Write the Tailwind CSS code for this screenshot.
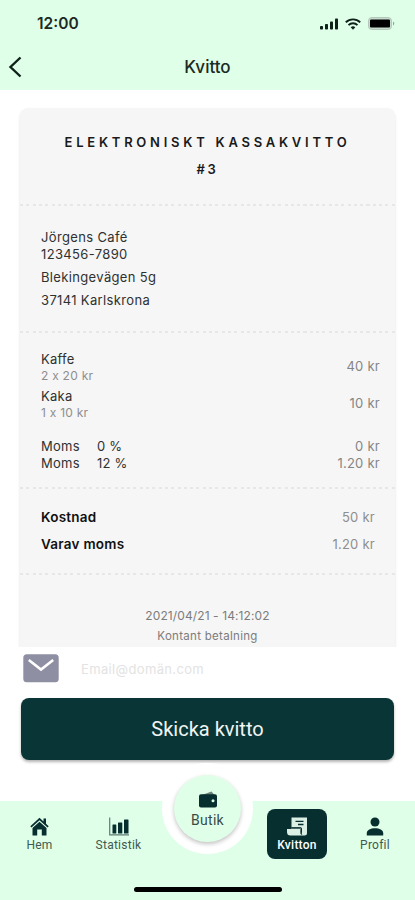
<!DOCTYPE html>
<html lang="sv">
<head>
  <meta charset="UTF-8" />
  <meta name="viewport" content="width=device-width, initial-scale=1.0" />
  <title>Kvitto</title>
  <script src="https://cdn.jsdelivr.net/npm/@tailwindcss/browser@4"></script>
</head>

<body class="bg-white font-['Inter',sans-serif] text-[#2f3131]">
  <div class="w-[415px] h-[900px] mx-auto flex flex-col overflow-hidden">

    <!-- Header -->
    <header class="h-[90px] shrink-0 bg-[#dfffe8]">
      <div class="h-[45px] pl-[37px] pr-[20px] pt-[2px] flex items-center justify-between">
        <span class="text-[15.500px] leading-5 font-semibold text-[#1c2a24]">12:00</span>
        <div class="flex items-center">
          <svg class="w-[19px] h-3" viewBox="0 0 19 12" fill="#10201a">
            <rect x="0" y="8" width="3" height="3.5" rx="0.8" />
            <rect x="5" y="6" width="3" height="5.500" rx="0.8" />
            <rect x="10" y="3.500" width="3" height="8" rx="0.8" />
            <rect x="15" y="0.500" width="3" height="11" rx="0.8" />
          </svg>
          <svg class="w-4 h-3 ml-[6px]" viewBox="0 0 16 12" fill="none" stroke="#10201a" stroke-width="1.900">
            <path d="M0.800 4.300a10.300 10.300 0 0 1 14.400 0" />
            <path d="M3.500 7.100a6.400 6.400 0 0 1 9 0" />
            <path d="M8 11.700L5.700 9.300a3.300 3.300 0 0 1 4.600 0z" fill="#10201a" stroke="none" />
          </svg>
          <svg class="w-[27px] h-[13px] ml-[7px]" viewBox="0 0 27 13">
            <rect x="0.500" y="0.500" width="23" height="12" rx="3.300" fill="#c5dccd" stroke="#b3c8ba" />
            <rect x="2" y="2.500" width="20" height="8" rx="1" fill="#000" />
            <path d="M25 4.500v4a2.200 2.200 0 0 0 0-4z" fill="#93a69a" />
          </svg>
        </div>
      </div>
      <div class="h-[43px] px-2 grid grid-cols-[1fr_auto_1fr] items-center">
        <svg class="w-[14px] h-[22px]" viewBox="0 0 14 22" fill="none" stroke="#10201a" stroke-width="2.400">
          <path d="M12.500 1.500L2.500 11l10 9.500" />
        </svg>
        <h1 class="text-[17px] leading-5 font-medium text-[#1c2a24]">Kvitto</h1>
      </div>
    </header>

    <main class="h-[711px] shrink-0 flex flex-col">
      <!-- Receipt -->
      <div class="h-[557px] shrink-0 pt-[18px] px-[20px] overflow-hidden">
        <section class="h-[560px] bg-[#f6f6f6] rounded-t-lg shadow-[0_2px_3px_rgba(0,0,0,0.12)] tracking-[0.250px] [font-feature-settings:'calt'_0]">
          <div class="h-[96px] pt-[21px] text-center text-[13px] leading-[27px] font-semibold tracking-[3.750px] text-[#1a1a1a]">
            <h2>ELEKTRONISKT KASSAKVITTO</h2>
            <p class="tracking-[2.800px]">#3</p>
          </div>
          <div class="h-[2px] bg-[repeating-linear-gradient(90deg,#e7e7e7_0_3px,transparent_3px_6.300px)]"></div>

          <div class="h-[125px] px-[21px] pt-[23px] text-[13px] leading-[17px] tracking-[0.350px]">
            <p>Jörgens Café</p>
            <p>123456-7890</p>
            <p class="mt-[6px]">Blekingevägen 5g</p>
            <p class="mt-[6px]">37141 Karlskrona</p>
          </div>
          <div class="h-[2px] bg-[repeating-linear-gradient(90deg,#e7e7e7_0_3px,transparent_3px_6.300px)]"></div>

          <div class="h-[154px] pl-[21px] pr-[15px] pt-[18px] text-[13px] leading-[17px]">
            <div class="h-[37px] flex justify-between">
              <div>
                <p>Kaffe</p>
                <p class="text-[12px] leading-4 text-[#8e8e8e]">2 x 20 kr</p>
              </div>
              <p class="pt-[7px] text-[#858585]">40 kr</p>
            </div>
            <div class="h-[50px] flex justify-between">
              <div>
                <p>Kaka</p>
                <p class="text-[12px] leading-4 text-[#8e8e8e]">1 x 10 kr</p>
              </div>
              <p class="pt-[7px] text-[#858585]">10 kr</p>
            </div>
            <div class="flex">
              <span class="w-14">Moms</span>
              <span>0 %</span>
              <span class="ml-auto text-[#858585]">0 kr</span>
            </div>
            <div class="flex">
              <span class="w-14">Moms</span>
              <span>12 %</span>
              <span class="ml-auto text-[#858585]">1.20 kr</span>
            </div>
          </div>
          <div class="h-[2px] bg-[repeating-linear-gradient(90deg,#e7e7e7_0_3px,transparent_3px_6.300px)]"></div>

          <div class="h-[84px] pl-[21px] pr-[20px] pt-[15px] text-[13px] leading-[27px]">
            <div class="flex justify-between">
              <span class="text-[13.500px] font-semibold text-[#111]">Kostnad</span>
              <span class="text-[#8e8e8e]">50 kr</span>
            </div>
            <div class="flex justify-between">
              <span class="text-[13.500px] font-semibold text-[#111]">Varav moms</span>
              <span class="text-[#8e8e8e]">1.20 kr</span>
            </div>
          </div>
          <div class="h-[2px] bg-[repeating-linear-gradient(90deg,#e7e7e7_0_3px,transparent_3px_6.300px)]"></div>

          <div class="pt-[31px] text-center text-[12px] leading-5 tracking-[0.100px] text-[#7c7c7c]">
            <p>2021/04/21 - 14:12:02</p>
            <p class="text-[11.500px] tracking-[0.300px]">Kontant betalning</p>
          </div>
        </section>
      </div>

      <!-- Send by email -->
      <div class="h-[51px] shrink-0 pl-[23px] pt-[7px] flex items-start">
        <svg class="w-[36px] h-[29px]" viewBox="0 0 36 29">
          <rect x="0.300" y="0.300" width="35.400" height="28" rx="3.500" fill="#8e8fa2" />
          <path d="M5.800 6L18 15.500 30.200 6" fill="none" stroke="#fff" stroke-width="2.600" />
        </svg>
        <span class="ml-[22px] pt-[6px] text-[13px] leading-[18px] tracking-[0.350px] text-[#e3e3e3]">Email@domän.com</span>
      </div>
      <button class="w-[373px] h-[62px] shrink-0 ml-[21px] rounded-lg bg-[#0a3536] text-[#f0f4f3] text-[20px] font-['Roboto',sans-serif] shadow-[0_2px_3px_rgba(0,0,0,0.3)]">Skicka kvitto</button>
    </main>

    <!-- Bottom navigation -->
    <nav class="relative h-[99px] shrink-0 bg-[#dfffe8] font-['Roboto',sans-serif] text-[12px] leading-[14px] tracking-[0.250px] text-[#3f5a50]">
      <div class="flex">
        <a href="#" class="w-[79px] pt-[16px] flex flex-col items-center">
          <svg class="w-[19px] h-[19px]" viewBox="0 0 19 19" fill="#082f30">
            <path d="M9.500 0.800L0.300 9.200l1.200 1.300 8-7.200 8 7.200 1.200-1.300-2.700-2.500V1.600h-2.500v2.800z" />
            <path d="M9.500 4.700L2.500 11V18.500h4.700v-6h4.600v6h4.700V11z" />
          </svg>
          <span class="mt-[2px]">Hem</span>
        </a>
        <a href="#" class="w-[79px] pt-[16px] flex flex-col items-center">
          <svg class="w-5 h-[19px]" viewBox="0 0 20 19" fill="#082f30">
            <path d="M0.700 0.500v17.300H20" fill="none" stroke="#5f7d73" stroke-width="1.200" />
            <rect x="3.500" y="7.500" width="3.800" height="9" rx="0.500" />
            <rect x="9" y="5.500" width="4.300" height="11" rx="0.500" />
            <rect x="15" y="2.500" width="4.500" height="14" rx="0.500" />
          </svg>
          <span class="mt-[2px]">Statistik</span>
        </a>
        <a href="#" class="w-[60px] h-[50px] ml-[109px] mt-2 pt-2 rounded-lg bg-[#082f30] flex flex-col items-center text-white font-medium">
          <svg class="w-[20px] h-[19px]" viewBox="0 0 20 19" fill="#dcefe4">
            <path d="M4.500 0.500H20V16a2.500 2.500 0 0 1-2.500 2.500H15V11.500a2 2 0 0 0-2-1.500H4.500z" />
            <path d="M0 12h13v3q0 2.500 2.500 3.500H3.500Q0 18.500 0 15z" />
            <path d="M8.500 4.300h8M11 7.500h5.500" fill="none" stroke="#082f30" stroke-width="1.300" />
            <path d="M4 11.200h9.500v3.500q0 2 1.500 3" fill="none" stroke="#6d8a80" stroke-width="0.900" />
          </svg>
          <span class="mt-[2px]">Kvitton</span>
        </a>
        <a href="#" class="w-[70px] ml-[13px] pt-[16px] flex flex-col items-center">
          <svg class="w-[18px] h-[19px]" viewBox="0 0 18 19" fill="#082f30">
            <circle cx="9" cy="5" r="4.500" />
            <path d="M0.800 18.500v-2.300c0-3.300 3.800-5 8.200-5s8.200 1.700 8.200 5v2.300z" />
          </svg>
          <span class="mt-[2px]">Profil</span>
        </a>
      </div>

      <!-- Floating store button -->
      <a href="#" class="absolute left-[162px] -top-[38px] w-[91px] h-[91px] p-3 rounded-full bg-white">
        <span class="w-[67px] h-[67px] pt-4 flex flex-col items-center rounded-full bg-[#dfffe8] text-[14px] leading-4 text-[#3a4b45] shadow-[0_2px_4px_rgba(0,0,0,0.24)]">
          <svg class="w-[18px] h-[17px]" viewBox="0 0 18 17">
            <path d="M3 4L12.500 0.500l3 3.500" fill="#6d8279" />
            <rect x="0" y="3.300" width="18" height="13.200" rx="2" fill="#082f30" />
            <circle cx="14" cy="9.800" r="1.500" fill="#dfffe8" />
          </svg>
          <span class="mt-[4px]">Butik</span>
        </span>
      </a>

      <!-- Home indicator -->
      <div class="absolute left-[134px] bottom-[8px] w-[148px] h-[5px] rounded-full bg-black"></div>
    </nav>
  </div>
</body>
</html>
